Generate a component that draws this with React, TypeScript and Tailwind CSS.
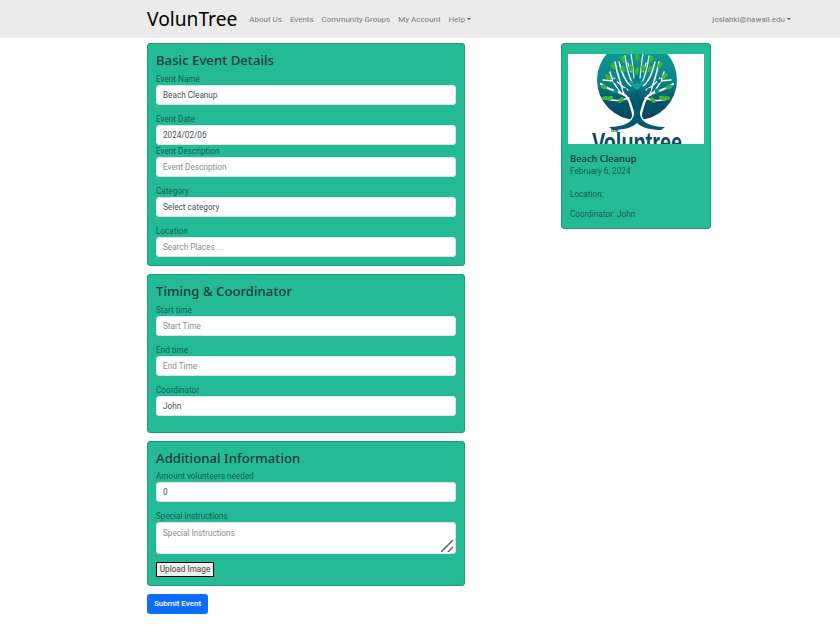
import type { ReactNode } from 'react';

const navLinks = ['About Us', 'Events', 'Community Groups', 'My Account'];

function Caret() {
  return <span className="ml-[2px] inline-block h-0 w-0 border-x-[2.5px] border-t-[2.5px] border-x-transparent border-t-[#555] align-[2px]" />;
}

function Navbar() {
  return (
    <nav className="flex h-[38px] items-center bg-[#ebebeb] pl-[147px] pr-[49px]">
      <span className="mr-3 text-[19.2px] leading-none text-black">VolunTree</span>
      <div className="flex gap-2 pt-px font-['Roboto',sans-serif] text-[8px] text-[#7b7b7b]">
        {navLinks.map((link) => (
          <a key={link}>{link}</a>
        ))}
        <a>
          Help
          <Caret />
        </a>
      </div>
      <a className="ml-auto pt-px font-['Roboto',sans-serif] text-[8px] text-[#7b7b7b]">
        josiahki@hawaii.edu
        <Caret />
      </a>
    </nav>
  );
}

function Section({ title, children }: { title: string; children: ReactNode }) {
  return (
    <section className="rounded-[3px] border border-[#1c9a7c] bg-[#24ba96] p-2">
      <h2 className="h-[21px] text-[13.2px] leading-[16px] font-medium text-[#1d3a38]">{title}</h2>
      {children}
    </section>
  );
}

function Label({ children }: { children: ReactNode }) {
  return <label className="block h-3 font-['Roboto',sans-serif] text-[8.2px] leading-[12px] text-[#14604f]">{children}</label>;
}

function Field({
  label,
  value,
  placeholder,
  spacing = 'mb-2',
}: {
  label: string;
  value?: string;
  placeholder?: string;
  spacing?: string;
}) {
  return (
    <div className={spacing}>
      <Label>{label}</Label>
      <input
        readOnly
        value={value ?? ''}
        placeholder={placeholder}
        className="block h-5 w-full rounded-[3px] border border-[#dee2e6] bg-white px-[6px] font-['Roboto',sans-serif] text-[8.2px] text-[#4a4f5c] outline-none placeholder:text-[#868d94]"
      />
    </div>
  );
}

function Logo() {
  const leaves = [
    [69, 3, 0], [55, 5, -15], [83, 5, 15], [45, 12, -30], [92, 11, 30], [40, 23, -50], [97, 22, 50],
    [36, 33, -70], [101, 33, 70], [37, 44, 80], [99, 44, -80], [42, 44, 70], [94, 44, -70],
    [53, 46, 40], [85, 46, -40], [55, 15, -25], [82, 15, 25], [69, 17, 0], [63, 14, -5], [75, 14, 5],
  ];
  return (
    <svg viewBox="0 0 136 90" className="block h-[90px] w-[136px] bg-white">
      <defs>
        <linearGradient id="disc" x1="0" y1="0" x2="0" y2="1">
          <stop offset="0" stopColor="#0ea59a" />
          <stop offset="0.55" stopColor="#0a7f85" />
          <stop offset="0.75" stopColor="#05566a" />
          <stop offset="1" stopColor="#04445c" />
        </linearGradient>
      </defs>
      <circle cx="69" cy="26" r="40" fill="url(#disc)" />
      {/* left half of the tree, the right half is mirrored */}
      {[0, 1].map((side) => (
        <g key={side} transform={side ? 'translate(138 0) scale(-1 1)' : undefined} fill="none" stroke="#fff" strokeLinecap="round">
          <path d="M62 49C64 56 66 60 65 63C63 68 59 72 52 75" strokeWidth="2.4" />
          <path d="M62 49C60 42 56 40 50 38C44 36 38 34 33 30" strokeWidth="2.2" />
          <path d="M61 44C54 47 46 47 38 45M52 38C48 32 44 28 42 18M56 41C54 32 50 24 47 8" strokeWidth="1.5" />
          <path d="M64 28C60 22 59 14 57 2M63 32C57 28 54 20 51 8M60 36C54 32 50 30 46 24M47 27C43 27 39 26 35 26" strokeWidth="1.3" />
          <path d="M66 24C65 16 65 10 63 0M63 18L60 9" strokeWidth="1.1" />
        </g>
      ))}
      <path d="M62 27L69 35L76 27" fill="none" stroke="#0ca69b" strokeWidth="2.2" />
      <path d="M67 36H71L72 60C73 68 82 73 97 73L93 76C84 76 74 74 69 69C64 74 54 76 45 76L41 73C56 73 65 68 66 60Z" fill="#075a6e" />
      <circle cx="69" cy="32" r="3" fill="#0ca69b" />
      <circle cx="48" cy="37" r="2.4" fill="#0b8f8d" />
      <circle cx="89" cy="37" r="2.4" fill="#0b8f8d" />
      <circle cx="57" cy="36" r="2" fill="#0a6f7c" />
      <circle cx="81" cy="36" r="2" fill="#0a6f7c" />
      <circle cx="47" cy="27" r="2" fill="#0a6f7c" />
      <circle cx="91" cy="27" r="2" fill="#0a6f7c" />
      <circle cx="69" cy="24" r="2" fill="#0a6f7c" />
      {leaves.map(([x, y, r]) => (
        <ellipse key={`${x}-${y}`} cx={x} cy={y} rx="2" ry="3.4" fill="#3fb52c" transform={`rotate(${r} ${x} ${y})`} />
      ))}
      <text x="43" y="78" fontSize="5" fontWeight="700" fill="#0b4a5f" fontFamily="Liberation Sans, sans-serif">
        the
      </text>
      <text
        x="24"
        y="98"
        fontSize="28"
        fontWeight="700"
        fill="#0b4a5f"
        textLength="90"
        lengthAdjust="spacingAndGlyphs"
        fontFamily="Liberation Sans, sans-serif"
      >
        Voluntree
      </text>
    </svg>
  );
}

function PreviewCard() {
  return (
    <aside className="h-[186px] w-[150px] rounded-[3px] border border-[#1c9a7c] bg-[#24ba96] px-[6px] pt-[10px] font-['Roboto',sans-serif] text-[8.2px] text-[#14604f]">
      <Logo />
      <div className="px-[2px] pt-2">
        <p className="font-['Noto_Sans',sans-serif] text-[9.4px] leading-[13px] font-medium text-[#12332f]">Beach Cleanup</p>
        <p className="leading-[13px]">February 6, 2024</p>
        <p className="mt-[10px] leading-[13px]">Location:</p>
        <p className="mt-[7px] leading-[13px]">Coordinator: John</p>
      </div>
    </aside>
  );
}

export default function App() {
  return (
    <div className="min-h-[625px] bg-white font-['Noto_Sans','Liberation_Sans',sans-serif]">
      <Navbar />
      <main className="flex items-start gap-[96px] pt-[5px] pl-[147px]">
        <form className="flex w-[318px] flex-col gap-2">
          <Section title="Basic Event Details">
            <Field label="Event Name" value="Beach Cleanup" />
            <Field label="Event Date" value="2024/02/06" spacing="mb-0" />
            <Field label="Event Description" placeholder="Event Description" />
            <Field label="Category" value="Select category" />
            <Field label="Location" placeholder="Search Places ..." spacing="mb-0" />
          </Section>
          <Section title="Timing & Coordinator">
            <Field label="Start time" placeholder="Start Time" />
            <Field label="End time" placeholder="End Time" />
            <Field label="Coordinator" value="John" />
          </Section>
          <Section title="Additional Information">
            <div className="-mt-px">
              <Field label="Amount volunteers needed" value="0" />
            </div>
            <Label>Special instructions</Label>
            <div className="relative">
              <textarea
                readOnly
                placeholder="Special Instructions"
                className="block h-8 w-full resize-none rounded-[3px] border border-[#dee2e6] bg-white px-[6px] py-[4px] font-['Roboto',sans-serif] text-[8.2px] leading-[12px] outline-none placeholder:text-[#868d94]"
              />
              <svg viewBox="0 0 12 12" className="absolute right-[3px] bottom-[2px] h-3 w-3" stroke="#555" strokeWidth="1.4" fill="none">
                <path d="M0 12L12 0M7 12L12 7" />
              </svg>
            </div>
            <button
              type="button"
              className="mt-2 block h-[15px] w-[58px] border border-black bg-[#efefef] text-center font-['Roboto',sans-serif] text-[8.2px] leading-[13px] whitespace-nowrap text-[#444]"
            >
              Upload Image
            </button>
          </Section>
          <button type="button" className="h-5 w-[61px] rounded-[3px] bg-[#0d6efd] font-['Roboto',sans-serif] text-[8px] font-medium text-white">
            Submit Event
          </button>
        </form>
        <PreviewCard />
      </main>
    </div>
  );
}
